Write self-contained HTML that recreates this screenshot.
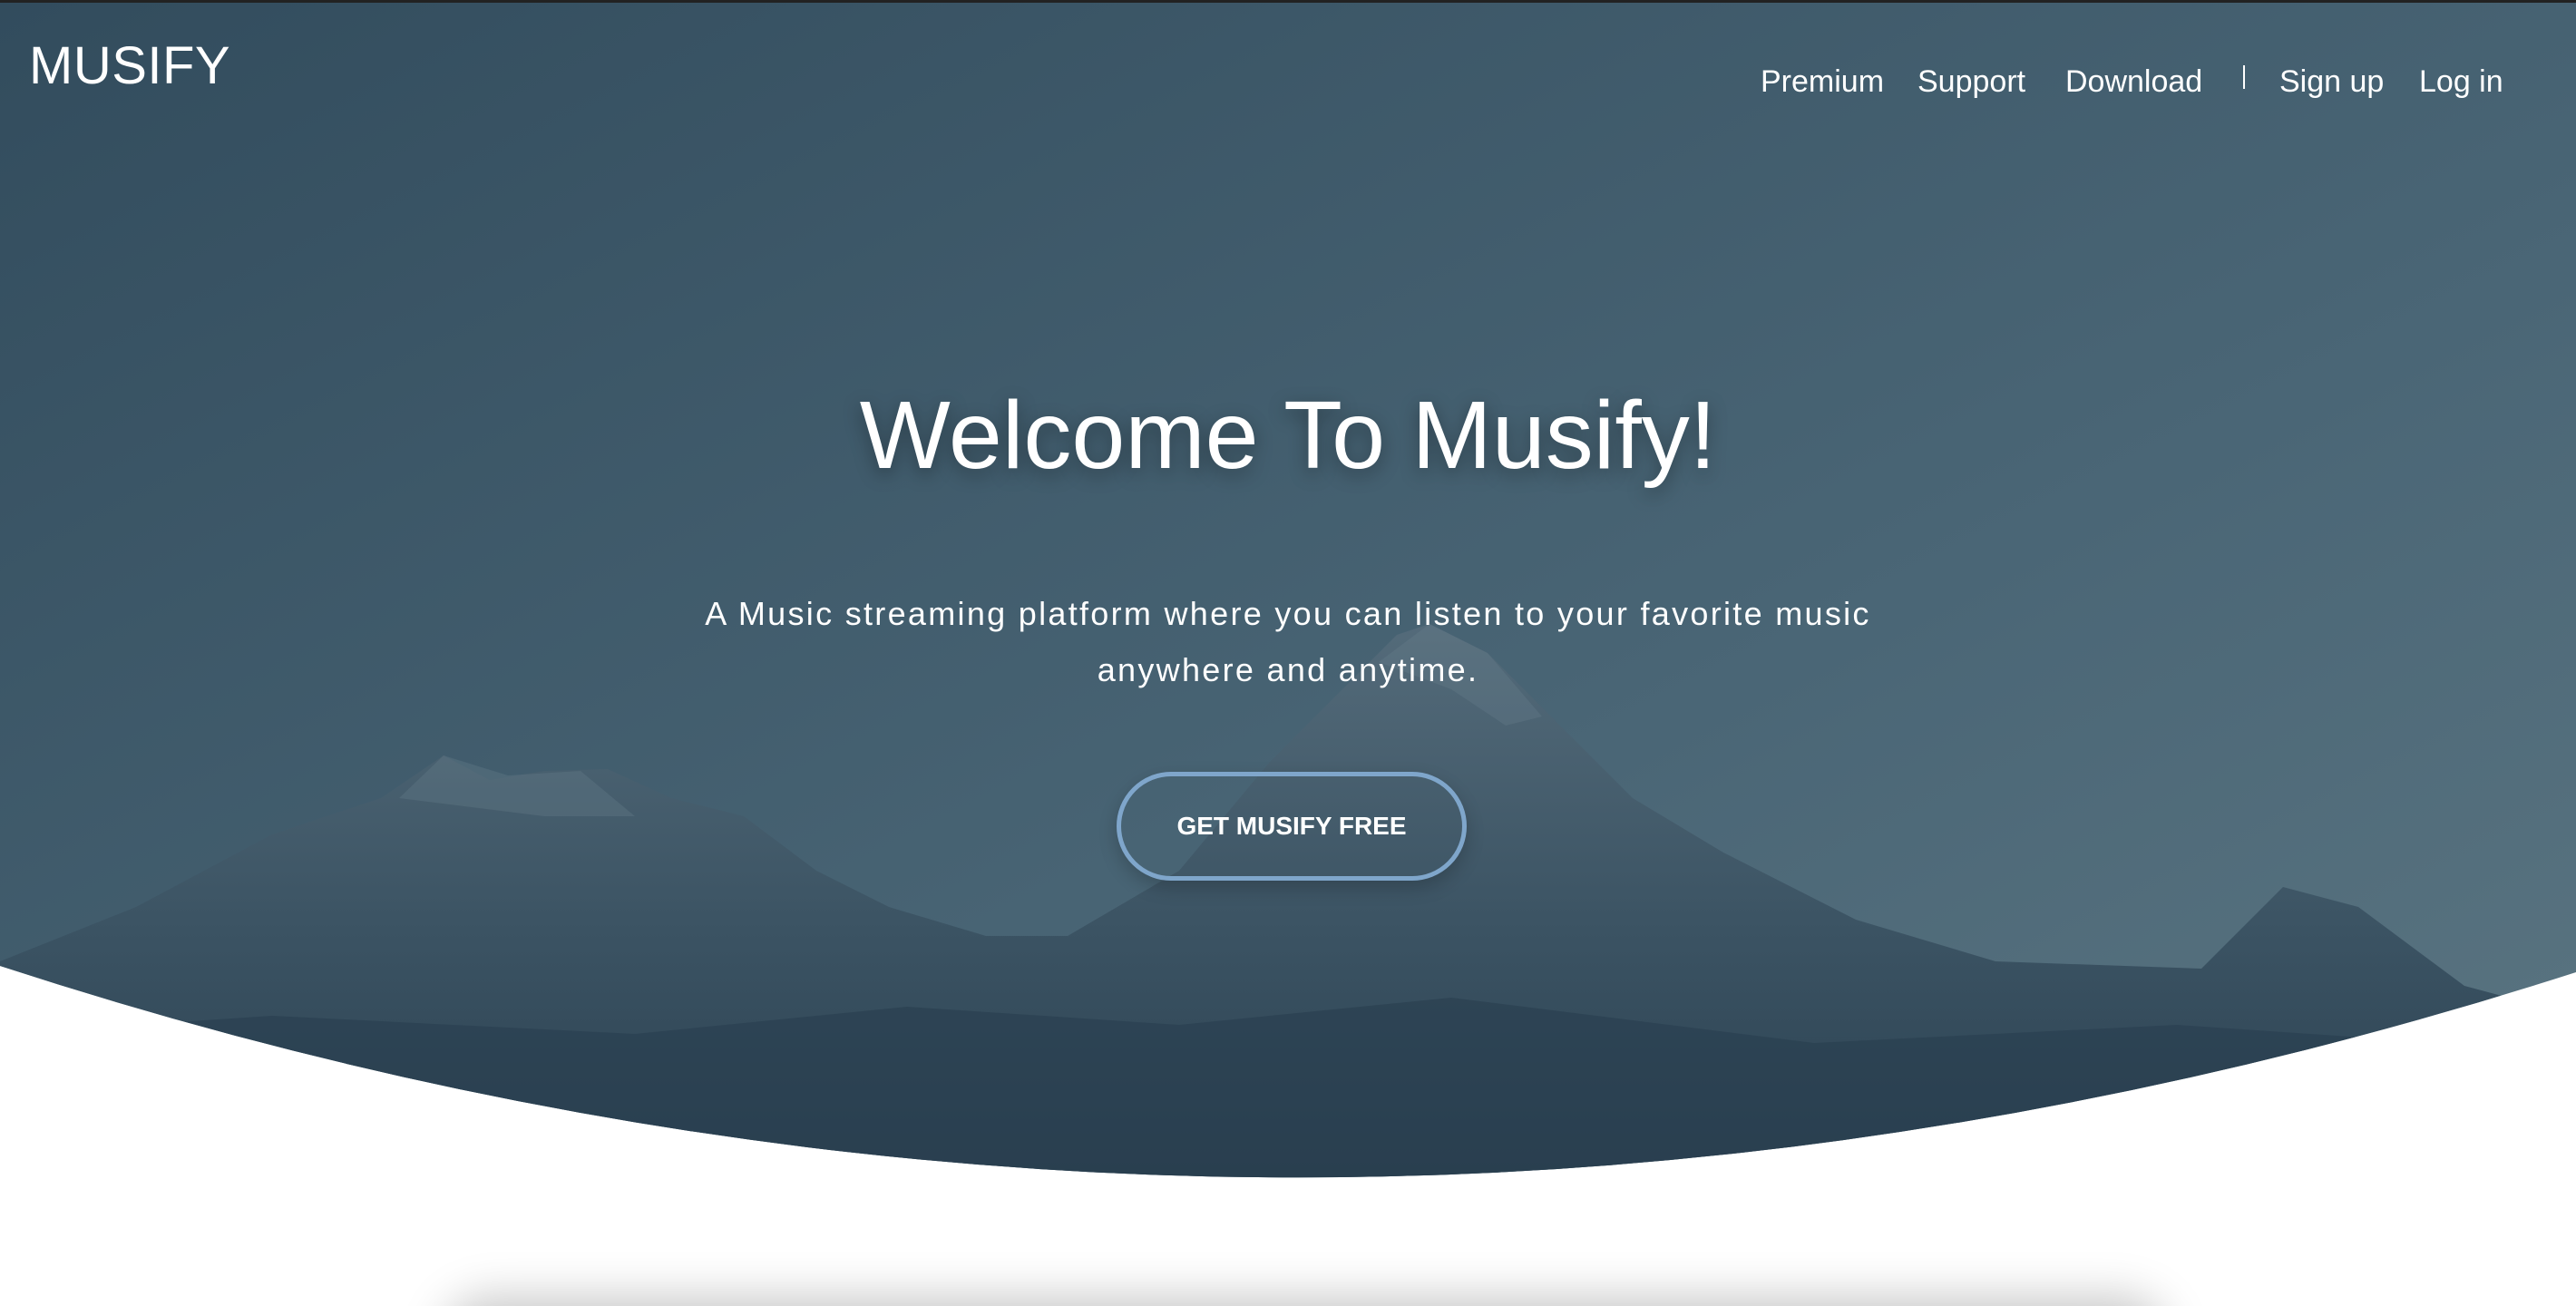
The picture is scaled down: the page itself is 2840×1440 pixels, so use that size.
<!DOCTYPE html>
<html><head><meta charset="utf-8"><style>
html,body{margin:0;padding:0;width:2840px;height:1440px;overflow:hidden;background:#fff;font-family:"Liberation Sans",sans-serif;}
.wrap{position:relative;width:2840px;height:1440px;overflow:hidden;}
svg.bg{position:absolute;left:0;top:0;}
.logo{position:absolute;left:32px;top:38px;color:#fff;font-size:58px;line-height:70px;letter-spacing:0.5px;}
.nav{position:absolute;top:68px;left:1941px;color:#fff;font-size:34px;line-height:44px;white-space:nowrap;}
.nav span{position:absolute;top:0;}
h1{position:absolute;left:0;width:2840px;top:420px;margin:0;text-align:center;color:#fff;font-weight:normal;font-size:106px;line-height:120px;text-shadow:0 6px 20px rgba(0,0,0,.35);}
p{position:absolute;left:0;width:2840px;top:646px;margin:0;text-align:center;color:#fff;font-size:36px;line-height:62px;letter-spacing:2.3px;}
.btn{position:absolute;left:1231px;top:851px;width:376px;height:110px;border:5px solid #7fa6cb;border-radius:60px;color:#fff;font-weight:bold;font-size:28px;line-height:110px;text-align:center;box-shadow:0 8px 20px rgba(0,0,0,.2);}
.card{position:absolute;left:489px;top:1445px;width:1900px;height:100px;border-radius:60px;background:#fff;box-shadow:0 -15px 50px rgba(0,0,0,.22);}
.topbar{position:absolute;left:0;top:0;width:2840px;height:3px;background:#222;}
</style></head><body><div class="wrap">
<svg class="bg" width="2840" height="1440" viewBox="0 0 2840 1440">
<defs>
<linearGradient id="sky" x1="0" y1="0" x2="1" y2="1">
<stop offset="0" stop-color="#324c5d"/><stop offset="0.6" stop-color="#4a6676"/><stop offset="1" stop-color="#5d7783"/>
</linearGradient>
<linearGradient id="mt" x1="0" y1="0" x2="0" y2="1">
<stop offset="0" stop-color="#546b7a"/><stop offset="0.45" stop-color="#3b5363"/><stop offset="0.8" stop-color="#2c4252"/><stop offset="1" stop-color="#283e4e"/>
</linearGradient>
<clipPath id="hero"><path d="M0 0 H2840 V1072 Q1420 1528 0 1065 Z"/></clipPath>
</defs>
<g clip-path="url(#hero)">
<rect width="2840" height="1440" fill="url(#sky)"/>
<path fill="url(#mt)" d="M0 1060 L150 1000 L300 920 L420 880 L489 833 L540 860 L600 850 L670 848 L740 880 L820 900 L900 960 L980 1000 L1087 1032 L1177 1032 L1300 960 L1400 840 L1480 760 L1540 700 L1576 688 L1640 720 L1720 800 L1800 880 L1900 940 L2046 1014 L2200 1060 L2427 1068 L2517 978 L2600 1000 L2717 1087 L2840 1120 L2840 1440 L0 1440 Z"/>
<path fill="#283e4e" opacity="0.6" d="M0 1140 L300 1120 L700 1140 L1000 1110 L1300 1130 L1600 1100 L2000 1150 L2400 1130 L2840 1160 L2840 1440 L0 1440 Z"/>
<path fill="#6a808d" opacity="0.3" d="M1520 730 L1576 688 L1640 720 L1700 790 L1660 800 L1600 760 Z M440 880 L489 833 L560 855 L640 850 L700 900 L600 900 Z"/>
</g>
</svg>
<div class="topbar"></div>
<div class="logo">MUSIFY</div>
<div class="nav">
<span style="left:0">Premium</span>
<span style="left:173px">Support</span>
<span style="left:336px">Download</span>
<span style="left:532px;top:4px;width:2px;height:26px;background:#fff;"></span>
<span style="left:572px">Sign up</span>
<span style="left:726px">Log in</span>
</div>
<h1>Welcome To Musify!</h1>
<p>A Music streaming platform where you can listen to your favorite music<br>anywhere and anytime.</p>
<div class="btn">GET MUSIFY FREE</div>
<div class="card"></div>
</div></body></html>
